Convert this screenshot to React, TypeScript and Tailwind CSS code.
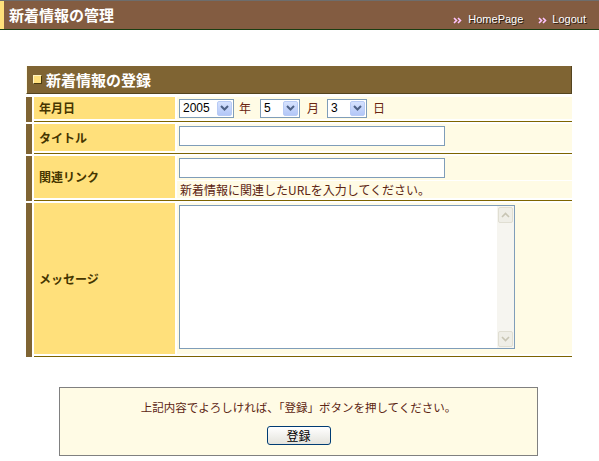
import React from 'react';

const jp = "font-['Noto_Sans_CJK_JP',sans-serif]";

function FakeSelect({ value, width }: { value: string; width: string }) {
  return (
    <div className={`${width} h-[19px] bg-white border border-[#7f9db9] flex items-center`}>
      <span className="flex-1 pl-[3px] text-[12px] leading-none text-black font-['Liberation_Sans',Arial,sans-serif]">
        {value}
      </span>
      <div className="w-[15px] h-[15px] mr-[1px] rounded-[2px] border border-[#b8cbf5] bg-gradient-to-b from-[#d6e2fe] to-[#b3c7f7] flex items-center justify-center">
        <svg width="9" height="6" viewBox="0 0 9 6">
          <path d="M1 1 L4.5 4.5 L8 1" fill="none" stroke="#4d6185" strokeWidth="2" />
        </svg>
      </div>
    </div>
  );
}

function Row({ label, height, children }: { label: string; height: string; children: React.ReactNode }) {
  return (
    <div className="flex">
      <div className="w-[6px] bg-[#7f6433]" />
      <div className="ml-[2px] flex-1 flex flex-col">
        <div className={`flex gap-[2px] ${height}`}>
          <div className={`w-[141px] bg-[#ffe07b] flex items-center pl-[5px] text-[12px] font-bold text-[#453500] ${jp}`}>
            {label}
          </div>
          <div className="flex-1 bg-[#fffbe5]">{children}</div>
        </div>
        <div className="mt-[2px] h-[1px] bg-[#7d6400]" />
      </div>
    </div>
  );
}

function Chevrons() {
  // the little double arrow in front of the header links
  return (
    <svg width="10" height="7" viewBox="0 0 10 7" className="mb-[1px]">
      <path d="M1 1 L3.5 3.5 L1 6 M5 1 L7.5 3.5 L5 6" fill="none" stroke="#ffc4ff" strokeWidth="1.6" />
    </svg>
  );
}

export default function App() {
  return (
    <div className={`w-[599px] h-[461px] bg-white ${jp}`}>
      {/* header */}
      <div className="h-[30px] bg-[#835c41] border-t border-t-[#6d6d6d] border-b border-b-[#1a3d12] flex">
        <div className="w-[4px] bg-[#ffe07b]" />
        <div className="pl-[5px] text-[15px] leading-[28px] font-bold text-white">新着情報の管理</div>
        <div className="ml-auto flex items-end pb-[4px] pr-[13px] gap-[15px] text-[11px] leading-none text-white font-['Liberation_Sans',Arial,sans-serif] [text-shadow:1px_1px_0_#2a1a10]">
          <span className="flex items-end gap-[5px]">
            <Chevrons />
            HomePage
          </span>
          <span className="flex items-end gap-[4px]">
            <Chevrons />
            Logout
          </span>
        </div>
      </div>

      {/* form section */}
      <div className="mt-[36px] ml-[26px] w-[546px]">
        <div className="h-[28px] bg-[#7f6433] border-l border-l-[#fffbe5] border-r border-r-[#54441f] border-b border-b-[#54441f] flex items-center pl-[6px]">
          <div className="w-[9px] h-[9px] bg-[#ffe07b] border border-t-[#fff3c0] border-l-[#fff3c0] border-r-[#4a3a10] border-b-[#4a3a10]" />
          <span className="ml-[4px] text-[15px] leading-none font-bold text-white">新着情報の登録</span>
        </div>

        <div className="pt-[3px] flex flex-col gap-[2px]">
          <Row label="年月日" height="h-[22px]">
            <div className="h-full flex items-center pl-[2px] text-[12px] text-[#6a2410]">
              <FakeSelect value="2005" width="w-[55px]" />
              <span className="ml-[5px]">年</span>
              <div className="ml-[9px]">
                <FakeSelect value="5" width="w-[40px]" />
              </div>
              <span className="ml-[7px]">月</span>
              <div className="ml-[8px]">
                <FakeSelect value="3" width="w-[40px]" />
              </div>
              <span className="ml-[6px]">日</span>
            </div>
          </Row>

          <Row label="タイトル" height="h-[27px]">
            <div className="pt-[2px] pl-[2px]">
              <div className="w-[266px] h-[20px] bg-white border border-[#7f9db9]" />
            </div>
          </Row>

          <Row label="関連リンク" height="h-[42px]">
            <div className="flex flex-col h-full">
              <div className="h-[24px] pt-[2px] pl-[2px]">
                <div className="w-[266px] h-[20px] bg-white border border-[#7f9db9]" />
              </div>
              <div className="h-[1px] bg-white" />
              <div className="flex-1 pl-[3px] text-[12px] leading-[17px] text-[#5c2412]">
                新着情報に関連したURLを入力してください。
              </div>
            </div>
          </Row>

          <Row label="メッセージ" height="h-[151px]">
            <div className="pt-[2px] pl-[2px]">
              <div className="w-[336px] h-[144px] bg-white border border-[#7f9db9] flex justify-end">
                <div className="w-[17px] h-full bg-[#f6f5f0] flex flex-col justify-between p-[1px]">
                  <div className="h-[16px] rounded-[2px] border border-[#e0ded2] bg-[#efeee7] flex items-center justify-center">
                    <svg width="9" height="6" viewBox="0 0 9 6">
                      <path d="M1 5 L4.5 1.5 L8 5" fill="none" stroke="#c8c5b4" strokeWidth="1.6" />
                    </svg>
                  </div>
                  <div className="h-[16px] rounded-[2px] border border-[#e0ded2] bg-[#efeee7] flex items-center justify-center">
                    <svg width="9" height="6" viewBox="0 0 9 6">
                      <path d="M1 1 L4.5 4.5 L8 1" fill="none" stroke="#c8c5b4" strokeWidth="1.6" />
                    </svg>
                  </div>
                </div>
              </div>
            </div>
          </Row>
        </div>
      </div>

      {/* confirm box */}
      <div className="mt-[30px] ml-[59px] w-[479px] border border-[#808080] bg-[#fffbe5] pt-[11px] pb-[10px] flex flex-col items-center">
        <p className="text-[11.5px] leading-[16px] text-[#5c2412]">
          上記内容でよろしければ、「登録」ボタンを押してください。
        </p>
        <button className="mt-[11px] w-[64px] h-[19px] rounded-[3px] border border-[#003c74] bg-gradient-to-b from-white to-[#e4e3dc] text-[12px] leading-none text-black">
          登録
        </button>
      </div>
    </div>
  );
}
